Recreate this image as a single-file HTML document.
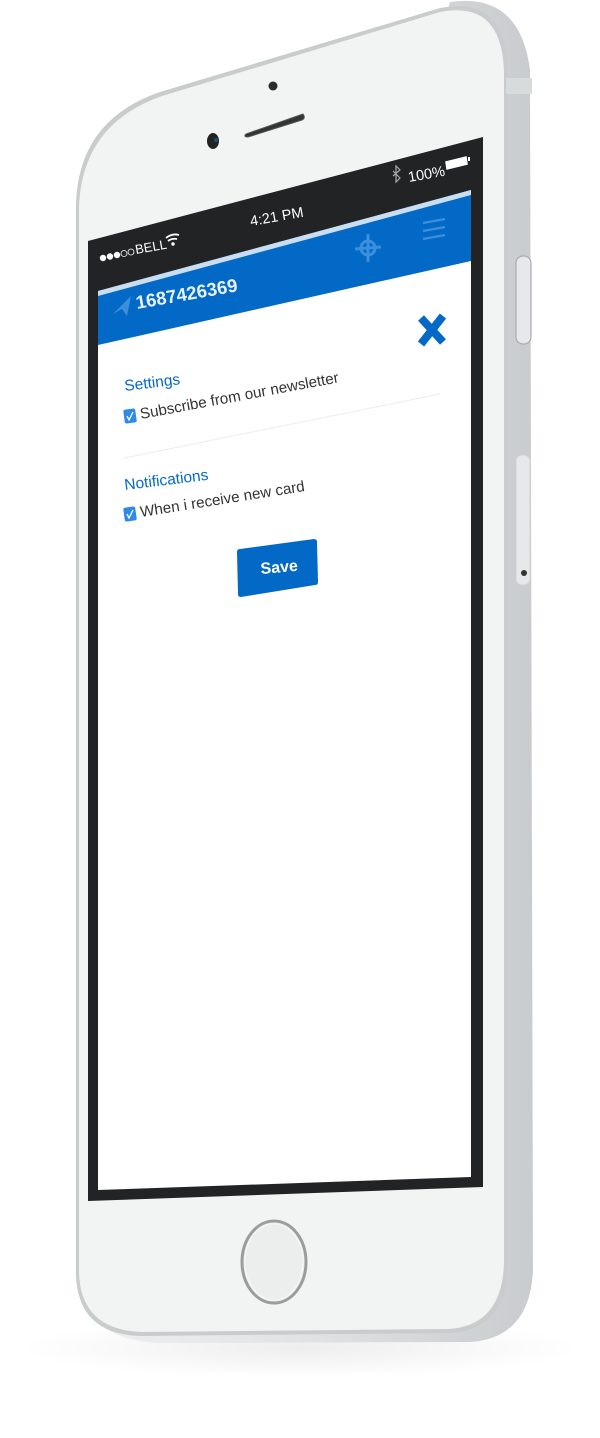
<!DOCTYPE html>
<html><head><meta charset="utf-8"><style>
html,body{margin:0;padding:0;background:#fff;}
svg{display:block}
text{font-family:"Liberation Sans",sans-serif}
</style></head><body>
<svg width="600" height="1438" viewBox="0 0 600 1438" xmlns="http://www.w3.org/2000/svg">
<defs>
<linearGradient id="side" x1="0" x2="1" y1="0" y2="0">
<stop offset="0" stop-color="#eef0f0"/><stop offset="0.5" stop-color="#e0e3e4"/><stop offset="1" stop-color="#c9ccce"/>
</linearGradient>
<radialGradient id="shadow" cx="0.5" cy="0.5" r="0.5">
<stop offset="0" stop-color="#000" stop-opacity="0.07"/><stop offset="1" stop-color="#000" stop-opacity="0"/>
</radialGradient>
</defs>
<ellipse cx="300" cy="1348" rx="280" ry="30" fill="url(#shadow)"/>
<path d="M450 2 Q520 -8 530 70 L533 1270 Q530 1338 470 1342 L160 1343 Q90 1340 80 1290 Z" fill="url(#side)"/>
<path d="M76 205 Q78 120 160 92 L440 8 Q505 -5 508 70 L508 1265 Q506 1330 450 1333 L140 1336 Q78 1334 76 1275 Z" fill="#c9cccd"/>
<path d="M79 207 Q82 124 162 96 L440 12 Q502 0 504 72 L504 1263 Q502 1326 448 1329 L142 1332 Q81 1330 79 1273 Z" fill="#f2f3f3"/>
<rect x="506" y="78" width="26" height="16" fill="#d8dbdb"/>
<rect x="516" y="256" width="15" height="88" rx="7" fill="#e6e8e9" stroke="#a9acae" stroke-width="1.2"/>
<rect x="516" y="455" width="14" height="130" rx="6" fill="#e6e8e9" stroke="#d0d2d4" stroke-width="1"/>
<circle cx="524" cy="573" r="3" fill="#333"/>
<circle cx="273" cy="86" r="4.5" fill="#2a2c2e"/>
<ellipse cx="213" cy="141" rx="6" ry="8" fill="#222"/>
<circle cx="216" cy="140" r="2" fill="#1d4f80"/>
<path d="M246 134 L303 114 Q306 118 302 120 L248 137 Q243 137 246 134 Z" fill="#333" stroke="#555" stroke-width="1"/>
<path d="M88 241 L483 137 L483 1187 L88 1201 Z" fill="#222325"/>
<path d="M98 291 L471 190 L471 1177 L98 1190 Z" fill="#fff"/>
<path d="M98 291 L471 190 L471 261 L98 345 Z" fill="#0369c7"/>
<path d="M98 291 L471 190 L471 195 L98 296 Z" fill="#c9def2"/>
<g fill="#fff">
<circle cx="103" cy="258" r="3.2"/><circle cx="110" cy="256.5" r="3.2"/><circle cx="117" cy="255" r="3.2"/>
<circle cx="124" cy="253.5" r="3" fill="none" stroke="#fff" stroke-width="0.8"/><circle cx="131" cy="252" r="3" fill="none" stroke="#fff" stroke-width="0.8"/>
</g>
<text x="136" y="254" font-size="13" fill="#fff" transform="rotate(-10 136 254)">BELL</text>
<path d="M166 238 Q172 233 179 235 M168 241 Q172 238 177 239" stroke="#fff" stroke-width="1.8" fill="none"/>
<circle cx="173" cy="244" r="1.7" fill="#fff"/>
<text x="251" y="226" font-size="14.5" fill="#fff" transform="rotate(-10 251 226)">4:21 PM</text>
<path d="M393 171 L400 178 L396 182 L396 166 L400 170 L393 176" stroke="#aaa" stroke-width="1.2" fill="none"/>
<text x="409" y="182" font-size="14.5" fill="#fff" transform="rotate(-10 409 182)">100%</text>
<path d="M446 162 L466 157 L467 164 L447 169 Z" fill="#fff" stroke="#fff" stroke-width="1.5"/>
<rect x="468" y="157" width="2" height="4" fill="#fff"/>
<path d="M113 314 L131 296 L127 316 L122 309 Z" fill="#3b8fdc"/>
<text x="137" y="309" font-size="18.5" font-weight="bold" fill="#e8f1fb" transform="rotate(-10 137 309)">1687426369</text>
<g stroke="#3b8fdc" stroke-width="3" fill="none">
<circle cx="368" cy="248" r="7"/>
<line x1="368" y1="234" x2="368" y2="262"/><line x1="355" y1="249" x2="381" y2="247"/>
</g>
<g stroke="#3b8fdc" stroke-width="2.2">
<line x1="423" y1="223" x2="445" y2="219"/><line x1="423" y1="231" x2="445" y2="227"/><line x1="423" y1="239" x2="445" y2="235"/>
</g>
<g stroke="#0369c7" stroke-width="8" stroke-linecap="butt">
<line x1="421" y1="318" x2="443" y2="342"/><line x1="443" y1="316" x2="421" y2="344"/>
</g>
<text x="125" y="391" font-size="15.5" fill="#0369c7" transform="rotate(-7 125 391)">Settings</text>
<rect x="124" y="409" width="12" height="14" rx="2" fill="#2d8ae6" transform="rotate(-8 130 416)"/>
<path d="M127 416 L129 420 L133 412" stroke="#fff" stroke-width="1.3" fill="none"/>
<text x="141" y="419" font-size="15.2" fill="#333" transform="rotate(-10.5 141 419)">Subscribe from our newsletter</text>
<line x1="124" y1="458" x2="440" y2="394" stroke="#ececec" stroke-width="1"/>
<text x="125" y="490" font-size="15.5" fill="#0369c7" transform="rotate(-7 125 490)">Notifications</text>
<rect x="124" y="507" width="12" height="14" rx="2" fill="#2d8ae6" transform="rotate(-8 130 514)"/>
<path d="M127 514 L129 518 L133 510" stroke="#fff" stroke-width="1.3" fill="none"/>
<text x="141" y="517" font-size="15.2" fill="#333" transform="rotate(-9 141 517)">When i receive new card</text>
<path d="M240 549 L314 539 Q317 539 317 542 L318 582 Q318 585 315 585 L241 597 Q238 597 238 594 L237 552 Q237 549 240 549 Z" fill="#0369c7"/>
<text x="261" y="574" font-size="16" font-weight="bold" fill="#fff" transform="rotate(-5 261 574)">Save</text>
<ellipse cx="274" cy="1262" rx="32" ry="41" fill="#eceded" stroke="#9a9c9e" stroke-width="3"/>
<ellipse cx="274" cy="1262" rx="29" ry="38" fill="none" stroke="#f7f7f7" stroke-width="1"/>
</svg>
</body></html>
